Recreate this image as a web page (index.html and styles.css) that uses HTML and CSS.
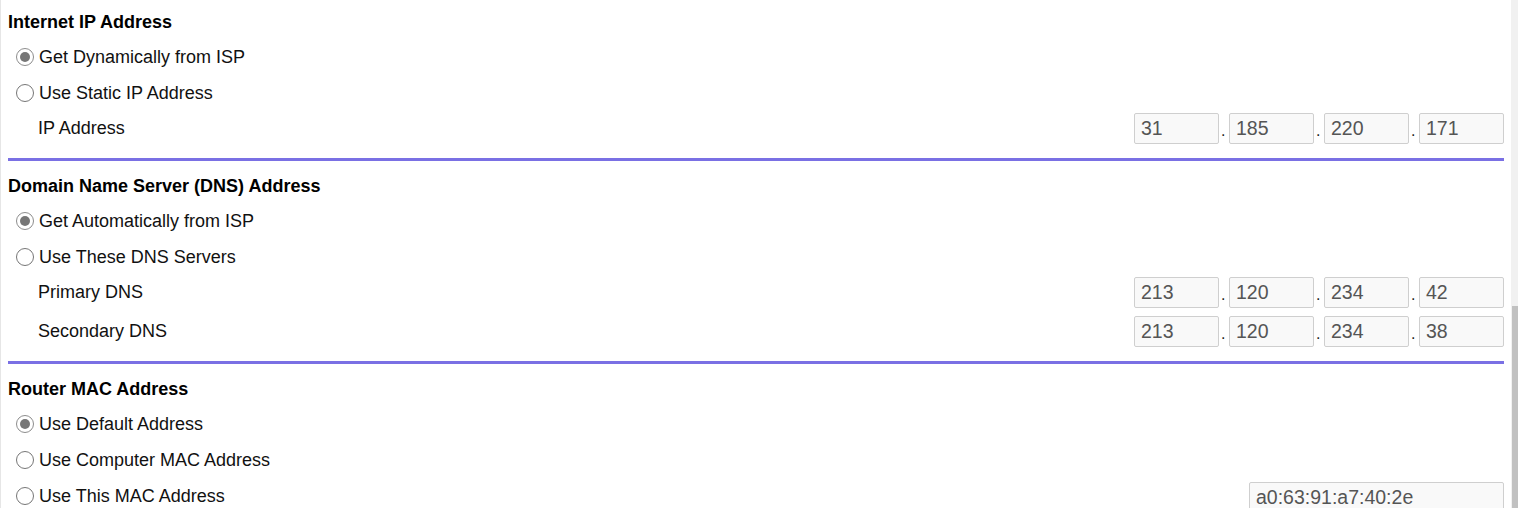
FILE: index.html
```html
<!DOCTYPE html>
<html>
<head>
<meta charset="utf-8">
<link rel="stylesheet" href="styles.css">
</head>
<body>
<div class="viewport">
  <section class="section first">
    <div class="heading">Internet IP Address</div>
    <div class="radio-row"><span class="radio checked"></span><span class="rlabel">Get Dynamically from ISP</span></div>
    <div class="radio-row"><span class="radio"></span><span class="rlabel">Use Static IP Address</span></div>
    <div class="field-row">
      <span class="flabel">IP Address</span>
      <div class="ip">
        <span class="box">31</span><span class="dot">.</span>
        <span class="box">185</span><span class="dot">.</span>
        <span class="box">220</span><span class="dot">.</span>
        <span class="box">171</span>
      </div>
    </div>
  </section>
  <div class="rule"></div>
  <section class="section">
    <div class="heading">Domain Name Server (DNS) Address</div>
    <div class="radio-row"><span class="radio checked"></span><span class="rlabel">Get Automatically from ISP</span></div>
    <div class="radio-row"><span class="radio"></span><span class="rlabel">Use These DNS Servers</span></div>
    <div class="field-row">
      <span class="flabel">Primary DNS</span>
      <div class="ip">
        <span class="box">213</span><span class="dot">.</span>
        <span class="box">120</span><span class="dot">.</span>
        <span class="box">234</span><span class="dot">.</span>
        <span class="box">42</span>
      </div>
    </div>
    <div class="field-row second">
      <span class="flabel">Secondary DNS</span>
      <div class="ip">
        <span class="box">213</span><span class="dot">.</span>
        <span class="box">120</span><span class="dot">.</span>
        <span class="box">234</span><span class="dot">.</span>
        <span class="box">38</span>
      </div>
    </div>
  </section>
  <div class="rule"></div>
  <section class="section">
    <div class="heading">Router MAC Address</div>
    <div class="radio-row"><span class="radio checked"></span><span class="rlabel">Use Default Address</span></div>
    <div class="radio-row"><span class="radio"></span><span class="rlabel">Use Computer MAC Address</span></div>
    <div class="radio-row mac-row"><span class="radio"></span><span class="rlabel">Use This MAC Address</span><span class="box mac">a0:63:91:a7:40:2e</span></div>
  </section>
</div>
<div class="scrollbar"><div class="thumb"></div></div>
</body>
</html>
```
FILE: styles.css
```css
html, body {
  margin: 0;
  padding: 0;
  height: 508px;
  overflow: hidden;
  background: #fff;
}
body {
  display: flex;
  font-family: "Liberation Sans", Arial, sans-serif;
  font-size: 18px;
  color: #111;
}
.viewport {
  flex: 1;
  border-left: 1px solid #e6e6e6;
  padding: 5px 7px 0 7px;
  display: flex;
  flex-direction: column;
}
.viewport > *,
.section > * {
  flex-shrink: 0;
}
.section {
  display: flex;
  flex-direction: column;
}
.heading {
  height: 34px;
  display: flex;
  align-items: center;
  font-weight: bold;
  color: #000;
  margin-top: 8px;
}
.section.first .heading {
  margin-top: 0;
}
.radio-row {
  height: 36px;
  display: flex;
  align-items: center;
  padding-left: 8px;
}
.radio {
  box-sizing: border-box;
  width: 18px;
  height: 18px;
  border: 1px solid #767676;
  border-radius: 50%;
  background: #fff;
  margin-right: 5px;
  margin-top: -1px;
  display: flex;
  align-items: center;
  justify-content: center;
  flex-shrink: 0;
}
.radio.checked {
  border-color: #8d8d8d;
}
.radio.checked::after {
  content: "";
  width: 10px;
  height: 10px;
  border-radius: 50%;
  background: #767676;
}
.rlabel {
  flex: 1;
}
.field-row {
  height: 35px;
  display: flex;
  align-items: center;
  padding-left: 30px;
}
.field-row.second {
  margin-top: 4px;
}
.flabel {
  flex: 1;
}
.ip {
  display: flex;
  align-items: center;
  margin-top: -1px;
}
.box {
  box-sizing: border-box;
  width: 85px;
  height: 31px;
  border: 1px solid #cfcfcf;
  border-radius: 2px;
  background: #f9f9f9;
  color: #555;
  font-size: 19.5px;
  padding-left: 6px;
  display: flex;
  align-items: center;
  flex-shrink: 0;
}
.dot {
  width: 10px;
  padding-left: 2px;
  box-sizing: border-box;
  font-size: 16px;
  line-height: 18px;
  margin-top: 6px;
  color: #222;
}
.box.mac {
  width: 255px;
  margin-top: 2px;
}
.rule {
  height: 3px;
  background: #7a70e4;
  margin-top: 12px;
}
.scrollbar {
  width: 7px;
  background: #f1f1f1;
  display: flex;
  flex-direction: column;
  justify-content: flex-end;
  align-items: flex-end;
  flex-shrink: 0;
}
.thumb {
  width: 6px;
  height: 202px;
  background: #c1c1c1;
}
```
